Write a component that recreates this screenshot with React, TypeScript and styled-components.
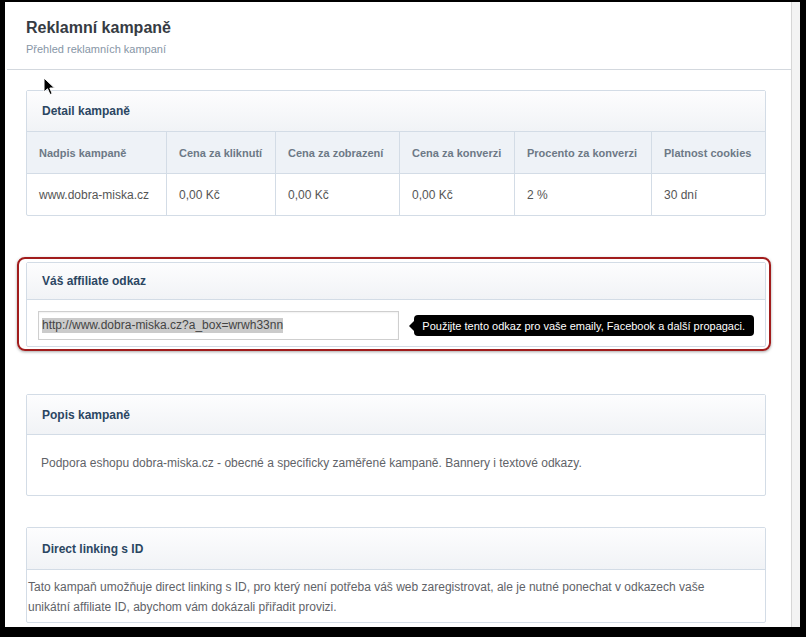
import styled, { createGlobalStyle } from 'styled-components';

const GlobalStyle = createGlobalStyle`
    html, body {
        margin: 0;
        padding: 0;
        background: #000;
    }
    body {
        font-family: "Liberation Sans", Arial, sans-serif;
        width: 806px;
        height: 637px;
        overflow: hidden;
    }
`;

const Frame = styled.div`
    padding: 2px 6px 10px 5px;
    height: 637px;
    box-sizing: border-box;
`;

const Window = styled.div`
    position: relative;
    display: flex;
    height: 100%;
    background: #fff;
    overflow: hidden;
`;

const Main = styled.main`
    flex: 1;
    min-width: 0;
    display: flex;
    flex-direction: column;
`;

const SideStrip = styled.div`
    width: 8px;
    border-left: 1px solid #d6d6d6;
    background: #f3f3f3;
`;

const PageHeader = styled.header`
    margin-left: 2px;
    padding: 16px 0 13px 19px;
    border-bottom: 1px solid #d3d8de;
`;

const Title = styled.h1`
    margin: 0;
    font-size: 16px;
    line-height: 20px;
    font-weight: bold;
    color: #363b43;
`;

const Subtitle = styled.p`
    margin: 4px 0 0;
    font-size: 11px;
    line-height: 14px;
    color: #8796a6;
`;

const Content = styled.div`
    padding: 20px 0 0 21px;
    display: flex;
    flex-direction: column;
    width: 740px;
`;

const Panel = styled.section<{ $gap?: number }>`
    border: 1px solid #d3dce6;
    border-radius: 2px;
    background: #fff;
    margin-bottom: ${props => props.$gap ?? 0}px;
`;

const PanelHeader = styled.div<{ $h: number }>`
    height: ${props => props.$h}px;
    display: flex;
    align-items: center;
    padding-left: 15px;
    background: linear-gradient(#fdfdfe, #f1f3f6);
    border-bottom: 1px solid #d3dce6;
    font-size: 12px;
    font-weight: bold;
    color: #2b4662;
`;

const PanelText = styled.p<{ $pad: string }>`
    margin: 0;
    padding: ${props => props.$pad};
    font-size: 12px;
    line-height: 20px;
    color: #5f6368;
`;

const Grid = styled.div`
    display: grid;
    grid-template-columns: 139px 109px 124px 115px 137px minmax(0, 1fr);
`;

const HeadCell = styled.div<{ $first?: boolean }>`
    height: 41px;
    display: flex;
    align-items: center;
    padding-left: 12px;
    background: #eef2f7;
    border-left: ${props => props.$first ? 'none' : '1px solid #d3dce6'};
    border-bottom: 1px solid #d3dce6;
    font-size: 11px;
    font-weight: bold;
    color: #6d7986;
    white-space: nowrap;
`;

const Cell = styled.div<{ $first?: boolean }>`
    height: 41px;
    display: flex;
    align-items: center;
    padding-left: 12px;
    border-left: ${props => props.$first ? 'none' : '1px solid #d3dce6'};
    font-size: 12px;
    color: #555;
`;

const Highlight = styled.div`
    margin: 0 -5px 43px -9px;
    padding: 3px 3px 2px 7px;
    border: 2px solid #a11c1c;
    border-radius: 8px;
    box-shadow: 0 1px 3px rgba(0, 0, 0, 0.35);
`;

const LinkRow = styled.div`
    display: flex;
    align-items: center;
    padding: 11px 11px 6px;
`;

const Field = styled.div`
    width: 363px;
    height: 29px;
    box-sizing: border-box;
    border: 1px solid #cfcfcf;
    box-shadow: inset 0 1px 2px rgba(0, 0, 0, 0.06);
    display: flex;
    align-items: center;
    padding-left: 3px;
    font-size: 12px;
    color: #444;
`;

const Selected = styled.span`
    background: #cbcbcb;
    line-height: 15px;
`;

const Tip = styled.div`
    position: relative;
    margin-left: 15px;
    height: 21px;
    display: flex;
    align-items: center;
    padding: 0 9px 0 8px;
    background: #000;
    border-radius: 4px;
    font-size: 11px;
    color: #fff;
    white-space: nowrap;
    &::before {
        content: '';
        position: absolute;
        left: -5px;
        top: 50%;
        margin-top: -5px;
        border-style: solid;
        border-width: 5px 5px 5px 0;
        border-color: transparent #000 transparent transparent;
    }
`;

const Pointer = styled.svg`
    position: absolute;
    left: 38px;
    top: 75px;
`;

const heads = ['Nadpis kampaně', 'Cena za kliknutí', 'Cena za zobrazení', 'Cena za konverzi', 'Procento za konverzi', 'Platnost cookies'];
const values = ['www.dobra-miska.cz', '0,00 Kč', '0,00 Kč', '0,00 Kč', '2 %', '30 dní'];

function App() {
    return (
        <>
            <GlobalStyle />
            <Frame>
                <Window>
                    <Main>
                        <PageHeader>
                            <Title>Reklamní kampaně</Title>
                            <Subtitle>Přehled reklamních kampaní</Subtitle>
                        </PageHeader>
                        <Content>
                            <Panel $gap={41}>
                                <PanelHeader $h={40}>Detail kampaně</PanelHeader>
                                <Grid>
                                    {heads.map((h, i) => (
                                        <HeadCell key={h} $first={i === 0}>{h}</HeadCell>
                                    ))}
                                    {values.map((v, i) => (
                                        <Cell key={i} $first={i === 0}>{v}</Cell>
                                    ))}
                                </Grid>
                            </Panel>
                            <Highlight>
                                <Panel>
                                    <PanelHeader $h={36}>Váš affiliate odkaz</PanelHeader>
                                    <LinkRow>
                                        <Field>
                                            <Selected>http://www.dobra-miska.cz?a_box=wrwh33nn</Selected>
                                        </Field>
                                        <Tip>Použijte tento odkaz pro vaše emaily, Facebook a další propagaci.</Tip>
                                    </LinkRow>
                                </Panel>
                            </Highlight>
                            <Panel $gap={31}>
                                <PanelHeader $h={39}>Popis kampaně</PanelHeader>
                                <PanelText $pad="18px 14px 22px">
                                    Podpora eshopu dobra-miska.cz - obecné a specificky zaměřené kampaně. Bannery i textové odkazy.
                                </PanelText>
                            </Panel>
                            <Panel>
                                <PanelHeader $h={41}>Direct linking s ID</PanelHeader>
                                <PanelText $pad="7px 40px 5px 1px">
                                    Tato kampaň umožňuje direct linking s ID, pro který není potřeba váš web zaregistrovat, ale je nutné ponechat v odkazech vaše unikátní affiliate ID, abychom vám dokázali přiřadit provizi.
                                </PanelText>
                            </Panel>
                        </Content>
                    </Main>
                    <SideStrip />
                    <Pointer width="14" height="20" viewBox="0 0 14 20">
                        <path d="M1 1 L1 15 L4.5 11.8 L7 17.5 L9.2 16.6 L6.8 11 L11.5 11 Z" fill="#000" stroke="#fff" strokeWidth="1" strokeLinejoin="round" />
                    </Pointer>
                </Window>
            </Frame>
        </>
    );
}

export default App;
